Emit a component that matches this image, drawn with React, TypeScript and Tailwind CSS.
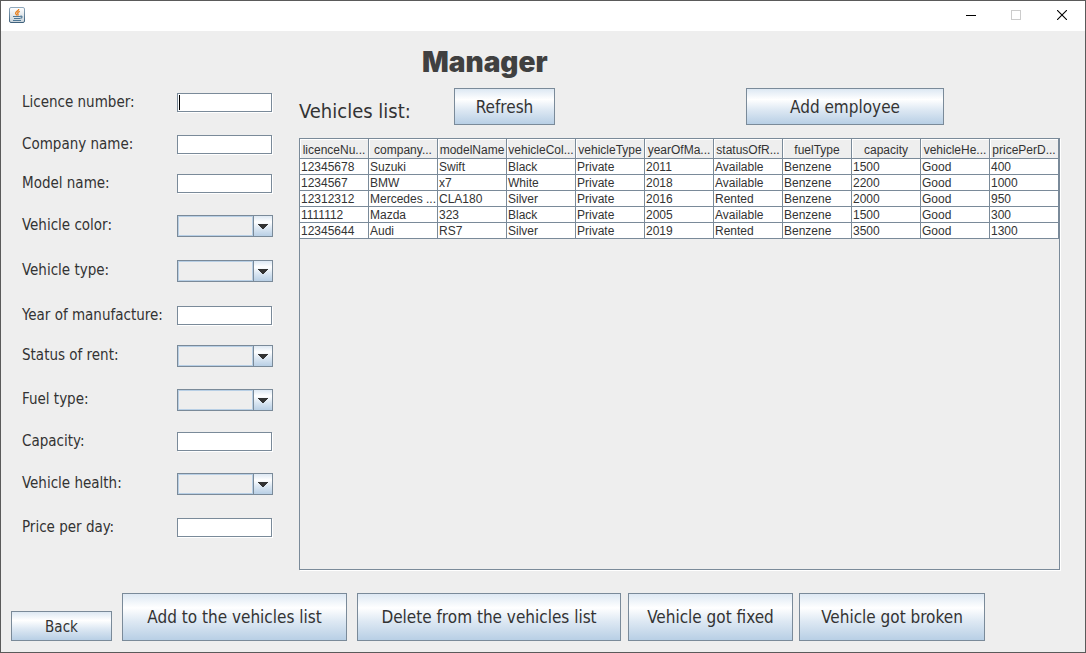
import React from "react";

type Field = { id: string; label: string; options?: string[] };

const fields: Field[] = [
  { id: "licence", label: "Licence number:" },
  { id: "company", label: "Company name:" },
  { id: "model", label: "Model name:" },
  { id: "color", label: "Vehicle color:", options: ["Black", "White", "Silver"] },
  { id: "type", label: "Vehicle type:", options: ["Private"] },
  { id: "year", label: "Year of manufacture:" },
  { id: "status", label: "Status of rent:", options: ["Available", "Rented"] },
  { id: "fuel", label: "Fuel type:", options: ["Benzene"] },
  { id: "capacity", label: "Capacity:" },
  { id: "health", label: "Vehicle health:", options: ["Good"] },
  { id: "price", label: "Price per day:" },
];

const columns = [
  "licenceNu...",
  "company...",
  "modelName",
  "vehicleCol...",
  "vehicleType",
  "yearOfMa...",
  "statusOfR...",
  "fuelType",
  "capacity",
  "vehicleHe...",
  "pricePerD...",
];

const rows = [
  ["12345678", "Suzuki", "Swift", "Black", "Private", "2011", "Available", "Benzene", "1500", "Good", "400"],
  ["1234567", "BMW", "x7", "White", "Private", "2018", "Available", "Benzene", "2200", "Good", "1000"],
  ["12312312", "Mercedes ...", "CLA180", "Silver", "Private", "2016", "Rented", "Benzene", "2000", "Good", "950"],
  ["1111112", "Mazda", "323", "Black", "Private", "2005", "Available", "Benzene", "1500", "Good", "300"],
  ["12345644", "Audi", "RS7", "Silver", "Private", "2019", "Rented", "Benzene", "3500", "Good", "1300"],
];

function OceanButton({ className, children }: { className: string; children: React.ReactNode }) {
  return (
    <button
      type="button"
      className={
        "shrink-0 whitespace-nowrap border border-[#7a8a99] bg-[linear-gradient(180deg,#dde8f3_0%,#ffffff_30%,#dde8f3_60%,#b8cfe5_100%)] pt-0.5 " +
        className
      }
    >
      {children}
    </button>
  );
}

function JavaIcon() {
  return (
    <svg width="16" height="16" viewBox="0 0 16 16" fill="none" aria-hidden="true">
      <defs>
        <linearGradient id="plate" x1="0" y1="0" x2="0" y2="1">
          <stop offset="0" stopColor="#ffffff" />
          <stop offset="1" stopColor="#c9d3da" />
        </linearGradient>
        <linearGradient id="rim" x1="0" y1="0" x2="0" y2="1">
          <stop offset="0" stopColor="#90a9bd" />
          <stop offset="1" stopColor="#3f617c" />
        </linearGradient>
      </defs>
      <rect x="0.5" y="0.5" width="15" height="15" rx="1.5" fill="url(#plate)" stroke="url(#rim)" />
      <path d="M9.8 2C10 3.8 6.4 4.4 6.6 6.2 6.7 7.2 7.7 7.4 7.7 8.4M10.8 4.4C8.8 5.2 8.2 6 9 7 9.4 7.7 9 8.1 8.6 8.5" stroke="#e8801f" strokeWidth="1.3" />
      <path d="M4 9.5H11.5M5 11.5H11M4 13.5H12M11.3 9.2C13.7 8.6 13.6 11 11.3 11.4" stroke="#4f7896" strokeWidth="1.1" />
    </svg>
  );
}

function ComboBox({ id, options }: { id: string; options: string[] }) {
  return (
    <div className="relative h-[22px] w-24">
      <select
        id={id}
        defaultValue=""
        className="block h-[22px] w-24 appearance-none border border-[#7a8a99] bg-[#eeeeee] pl-1 text-xs outline-none"
      >
        <option value=""></option>
        {options.map((o) => (
          <option key={o}>{o}</option>
        ))}
      </select>
      <span className="pointer-events-none absolute inset-y-px left-px right-5 border border-[#b8cfe5]" />
      <span className="pointer-events-none absolute inset-y-px right-px flex w-[19px] items-center justify-center border-l border-[#7a8a99] bg-[linear-gradient(180deg,#dde8f3_0%,#ffffff_30%,#dde8f3_60%,#b8cfe5_100%)]">
        <svg width="10" height="5" viewBox="0 0 10 5" shapeRendering="crispEdges" aria-hidden="true">
          <path d="M0 0H10V1H9V2H8V3H7V4H6V5H4V4H3V3H2V2H1V1H0Z" fill="#333333" />
        </svg>
      </span>
    </div>
  );
}

function TextField({ id, caret }: { id: string; caret: boolean }) {
  return (
    <div className="relative h-5 w-24">
      <input
        id={id}
        type="text"
        className="block h-[19px] w-[95px] border border-[#7a8a99] bg-white px-1 text-xs shadow-[1px_1px_0_#ffffff] outline-none"
      />
      {caret && <span className="pointer-events-none absolute left-0.5 top-0.5 h-[15px] w-px bg-black" />}
    </div>
  );
}

export default function App() {
  return (
    <div className="flex min-h-screen flex-col border border-[#5a5a5a] bg-[#eeeeee] font-['DejaVu_Sans_Condensed','Noto_Sans',sans-serif] text-[#333333]">
      <header className="flex h-[30px] shrink-0 items-center justify-between bg-white pb-0.5 pl-2">
        <JavaIcon />
        <div className="flex h-full">
          <button type="button" aria-label="Minimize" className="flex w-[46px] items-center justify-center">
            <svg width="12" height="10" viewBox="0 0 12 10" shapeRendering="crispEdges">
              <path d="M2 5.5H12" stroke="#000" />
            </svg>
          </button>
          <button type="button" aria-label="Maximize" disabled className="flex w-[46px] items-center justify-center">
            <svg width="10" height="10" viewBox="0 0 10 10" shapeRendering="crispEdges">
              <rect x="0.5" y="0.5" width="9" height="9" fill="none" stroke="#cccccc" />
            </svg>
          </button>
          <button type="button" aria-label="Close" className="flex w-[46px] items-center justify-center">
            <svg width="10" height="10" viewBox="0 0 10 10">
              <path d="M0 0L10 10M10 0L0 10" stroke="#000" strokeWidth="1.1" />
            </svg>
          </button>
        </div>
      </header>

      <main className="flex grow flex-col pb-[11px]">
        <div className="flex grow">
          <form className="grid w-[298px] shrink-0 grid-rows-[42px_39px_42px_45px_45px_40px_44px_42px_42px_44px_22px] content-start pl-[21px] pt-[61px]">
            {fields.map((f, i) => (
              <div key={f.id} className="flex h-[22px] items-center">
                <label htmlFor={f.id} className="w-[155px] whitespace-nowrap pb-0.5 text-[15px] leading-5">
                  {f.label}
                </label>
                {f.options ? <ComboBox id={f.id} options={f.options} /> : <TextField id={f.id} caret={i === 0} />}
              </div>
            ))}
          </form>

          <section className="mr-[25px] flex min-w-0 grow flex-col">
            <h1 className="h-[57px] pl-[123px] pt-[13px] font-['Inter','Lato',sans-serif] text-[28px] font-black leading-9 text-[#404040]">
              Manager
            </h1>
            <div className="flex h-[37px] items-stretch">
              <h2 className="w-[155px] pt-[9px] text-xl leading-7">Vehicles list:</h2>
              <OceanButton className="w-[101px] text-[17px]">Refresh</OceanButton>
              <OceanButton className="ml-[191px] w-[198px] text-[17px]">Add employee</OceanButton>
            </div>
            <div className="mt-[13px] grow border border-[#7a8a99] shadow-[1px_1px_0_#ffffff]">
              <table className="w-full table-fixed border-separate border-spacing-0 font-['Liberation_Sans',Arial,sans-serif] text-xs leading-[14px]">
                <thead>
                  <tr className="h-5">
                    {columns.map((c) => (
                      <th
                        key={c}
                        scope="col"
                        className="overflow-hidden whitespace-nowrap border-b border-r border-[#7a8a99] p-0 pt-0.5 text-center font-normal shadow-[inset_1px_1px_0_#ffffff]"
                      >
                        {c}
                      </th>
                    ))}
                  </tr>
                </thead>
                <tbody>
                  {rows.map((r) => (
                    <tr key={r[0]} className="h-4 bg-white">
                      {r.map((v, i) => (
                        <td key={i} className="overflow-hidden whitespace-nowrap border-b border-r border-[#7a8a99] pb-0 pl-px pr-0 pt-px">
                          {v}
                        </td>
                      ))}
                    </tr>
                  ))}
                </tbody>
              </table>
            </div>
          </section>
        </div>

        <div className="mt-[23px] flex items-end gap-[7px] pl-2.5">
          <div className="flex items-end gap-2.5">
            <OceanButton className="h-[30px] w-[101px] text-[15px]">Back</OceanButton>
            <OceanButton className="h-12 w-[225px] text-[17px]">Add to the vehicles list</OceanButton>
            <OceanButton className="h-12 w-[264px] text-[17px]">Delete from the vehicles list</OceanButton>
          </div>
          <div className="flex items-end gap-1.5">
            <OceanButton className="h-12 w-[165px] text-[17px]">Vehicle got fixed</OceanButton>
            <OceanButton className="h-12 w-[186px] text-[17px]">Vehicle got broken</OceanButton>
          </div>
        </div>
      </main>
    </div>
  );
}
